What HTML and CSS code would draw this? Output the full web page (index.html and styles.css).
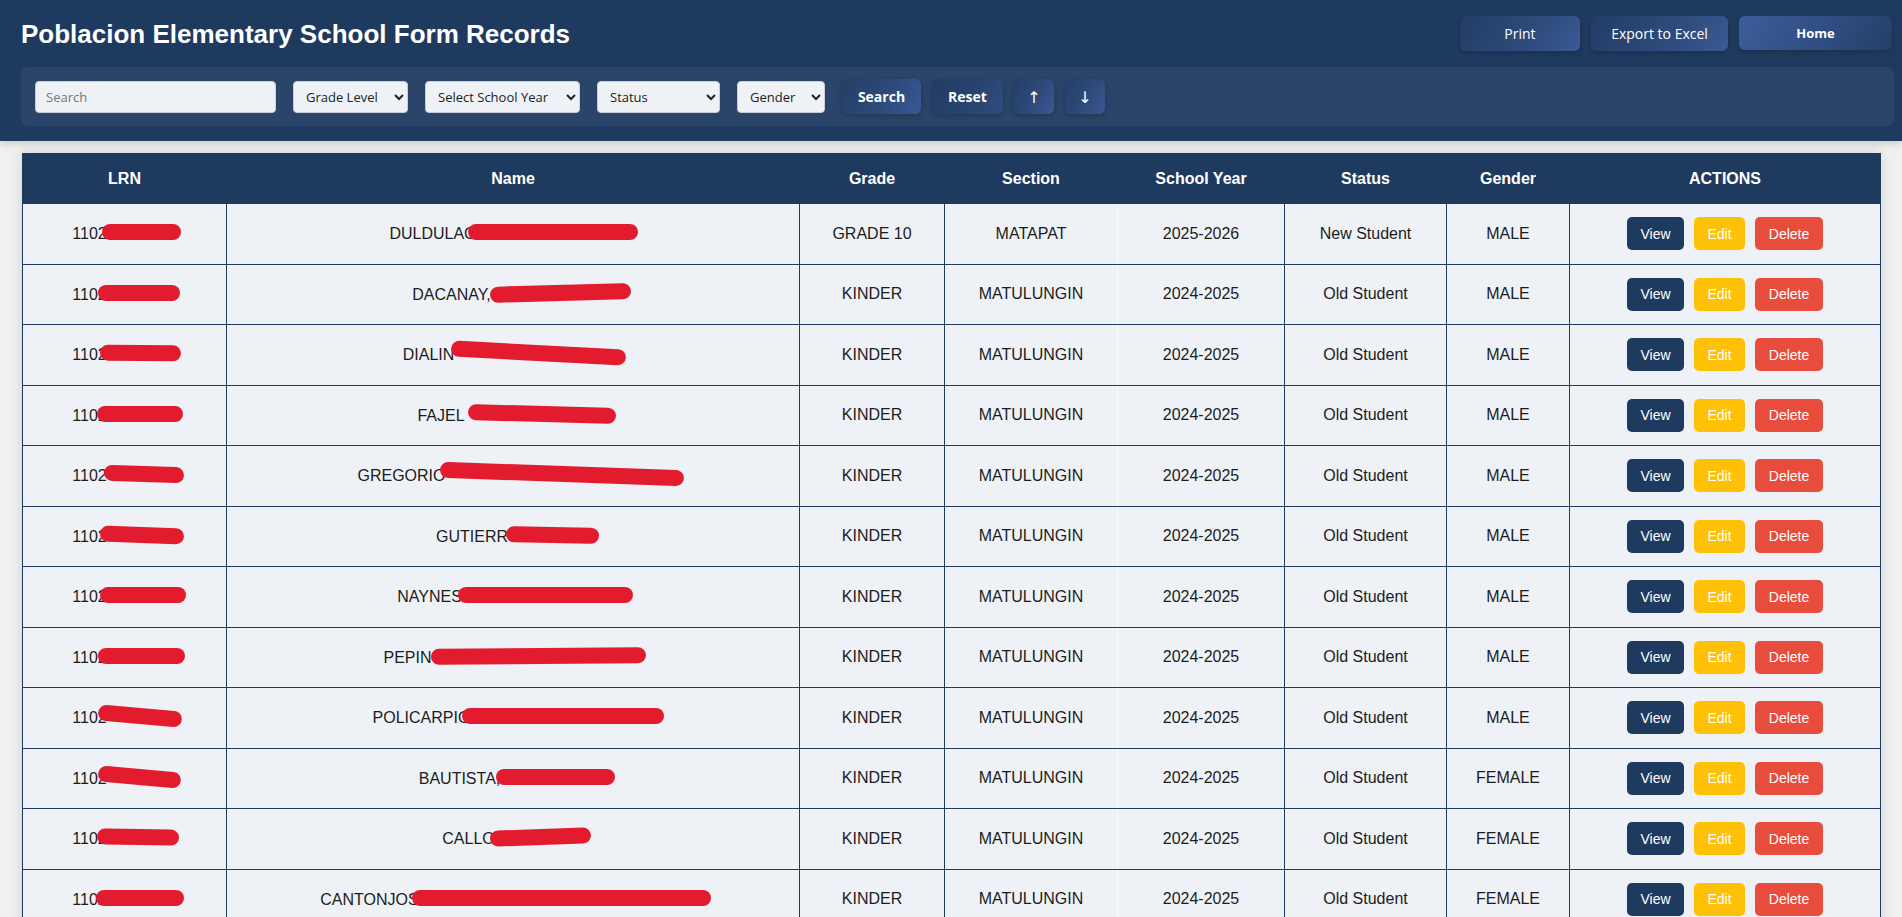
FILE: index.html
```html
<!DOCTYPE html>
<html lang="en">
<head>
<meta charset="utf-8">
<title>Poblacion Elementary School Form Records</title>
<link rel="stylesheet" href="styles.css">
</head>
<body>
<header class="topbar">
  <div class="title-row">
    <h1 class="page-title">Poblacion Elementary School Form Records</h1>
    <div class="top-actions">
      <button class="btn-top btn-print">Print</button>
      <button class="btn-top btn-export">Export to Excel</button>
      <button class="btn-top btn-home">Home</button>
    </div>
  </div>
  <div class="filters">
    <div class="controls">
      <input class="field field-search" type="text" placeholder="Search">
      <select class="field sel-grade"><option>Grade Level</option></select>
      <select class="field sel-year"><option>Select School Year</option></select>
      <select class="field sel-status"><option>Status</option></select>
      <select class="field sel-gender"><option>Gender</option></select>
    </div>
    <div class="btn-group">
      <button class="btn-f btn-search">Search</button>
      <button class="btn-f btn-reset">Reset</button>
      <button class="btn-f btn-arrow">&#8593;</button>
      <button class="btn-f btn-arrow">&#8595;</button>
    </div>
  </div>
</header>

<main class="content">
  <table class="records">
    <colgroup>
      <col class="c-lrn"><col class="c-name"><col class="c-grade"><col class="c-section"><col class="c-year"><col class="c-status"><col class="c-gender"><col class="c-actions">
    </colgroup>
    <thead>
      <tr><th>LRN</th><th>Name</th><th>Grade</th><th>Section</th><th>School Year</th><th>Status</th><th>Gender</th><th>ACTIONS</th></tr>
    </thead>
    <tbody>
      <tr>
        <td>1102<span class="mark" style="--ml:-5px;--w:79px;--mr:-4px;--r:0deg"></span></td>
        <td>DULDULAC<span class="mark" style="--ml:-8px;--w:170px;--mr:-1px;--r:0deg"></span></td>
        <td>GRADE 10</td><td class="sec">MATAPAT</td><td>2025-2026</td><td>New Student</td><td>MALE</td>
        <td><div class="acts"><button class="act view">View</button><button class="act edit">Edit</button><button class="act del">Delete</button></div></td>
      </tr>
      <tr>
        <td>1102<span class="mark" style="--ml:-9px;--w:82px;--mr:-3px;--r:0deg"></span></td>
        <td>DACANAY,<span class="mark" style="--ml:-1px;--w:141px;--mr:-17px;--r:-1.5deg"></span></td>
        <td>KINDER</td><td class="sec">MATULUNGIN</td><td>2024-2025</td><td>Old Student</td><td>MALE</td>
        <td><div class="acts"><button class="act view">View</button><button class="act edit">Edit</button><button class="act del">Delete</button></div></td>
      </tr>
      <tr>
        <td>1102<span class="mark" style="--ml:-7px;--w:81px;--mr:-4px;--r:0.5deg"></span></td>
        <td>DIALIN<span class="mark" style="--ml:-3px;--w:175px;--mr:-3px;--r:3deg"></span></td>
        <td>KINDER</td><td class="sec">MATULUNGIN</td><td>2024-2025</td><td>Old Student</td><td>MALE</td>
        <td><div class="acts"><button class="act view">View</button><button class="act edit">Edit</button><button class="act del">Delete</button></div></td>
      </tr>
      <tr>
        <td>1102<span class="mark" style="--ml:-10px;--w:86px;--mr:-6px;--r:0deg"></span></td>
        <td>FAJEL<span class="mark" style="--ml:3px;--w:148px;--mr:-7px;--r:1.5deg"></span></td>
        <td>KINDER</td><td class="sec">MATULUNGIN</td><td>2024-2025</td><td>Old Student</td><td>MALE</td>
        <td><div class="acts"><button class="act view">View</button><button class="act edit">Edit</button><button class="act del">Delete</button></div></td>
      </tr>
      <tr>
        <td>1102<span class="mark" style="--ml:-3px;--w:80px;--mr:-7px;--r:2deg"></span></td>
        <td>GREGORIO<span class="mark" style="--ml:-6px;--w:244px;--mr:-15px;--r:2deg"></span></td>
        <td>KINDER</td><td class="sec">MATULUNGIN</td><td>2024-2025</td><td>Old Student</td><td>MALE</td>
        <td><div class="acts"><button class="act view">View</button><button class="act edit">Edit</button><button class="act del">Delete</button></div></td>
      </tr>
      <tr>
        <td>1102<span class="mark" style="--ml:-7px;--w:84px;--mr:-7px;--r:2deg"></span></td>
        <td>GUTIERR<span class="mark" style="--ml:-2px;--w:93px;--mr:-9px;--r:1deg"></span></td>
        <td>KINDER</td><td class="sec">MATULUNGIN</td><td>2024-2025</td><td>Old Student</td><td>MALE</td>
        <td><div class="acts"><button class="act view">View</button><button class="act edit">Edit</button><button class="act del">Delete</button></div></td>
      </tr>
      <tr>
        <td>1102<span class="mark" style="--ml:-7px;--w:86px;--mr:-9px;--r:0deg"></span></td>
        <td>NAYNES<span class="mark" style="--ml:-4px;--w:175px;--mr:-4px;--r:0deg"></span></td>
        <td>KINDER</td><td class="sec">MATULUNGIN</td><td>2024-2025</td><td>Old Student</td><td>MALE</td>
        <td><div class="acts"><button class="act view">View</button><button class="act edit">Edit</button><button class="act del">Delete</button></div></td>
      </tr>
      <tr>
        <td>1102<span class="mark" style="--ml:-9px;--w:87px;--mr:-8px;--r:0deg"></span></td>
        <td>PEPIN<span class="mark" style="--ml:-1px;--w:215px;--mr:-3px;--r:-0.5deg"></span></td>
        <td>KINDER</td><td class="sec">MATULUNGIN</td><td>2024-2025</td><td>Old Student</td><td>MALE</td>
        <td><div class="acts"><button class="act view">View</button><button class="act edit">Edit</button><button class="act del">Delete</button></div></td>
      </tr>
      <tr>
        <td>1102<span class="mark" style="--ml:-9px;--w:84px;--mr:-5px;--r:5deg"></span></td>
        <td>POLICARPIO<span class="mark" style="--ml:-8px;--w:202px;--mr:-11px;--r:0deg"></span></td>
        <td>KINDER</td><td class="sec">MATULUNGIN</td><td>2024-2025</td><td>Old Student</td><td>MALE</td>
        <td><div class="acts"><button class="act view">View</button><button class="act edit">Edit</button><button class="act del">Delete</button></div></td>
      </tr>
      <tr>
        <td>1102<span class="mark" style="--ml:-9px;--w:83px;--mr:-4px;--r:5deg"></span></td>
        <td>BAUTISTA,<span class="mark" style="--ml:-4px;--w:119px;--mr:-8px;--r:0deg"></span></td>
        <td>KINDER</td><td class="sec">MATULUNGIN</td><td>2024-2025</td><td>Old Student</td><td>FEMALE</td>
        <td><div class="acts"><button class="act view">View</button><button class="act edit">Edit</button><button class="act del">Delete</button></div></td>
      </tr>
      <tr>
        <td>1102<span class="mark" style="--ml:-10px;--w:82px;--mr:-2px;--r:1deg"></span></td>
        <td>CALLO<span class="mark" style="--ml:-5px;--w:101px;--mr:-7px;--r:-2deg"></span></td>
        <td>KINDER</td><td class="sec">MATULUNGIN</td><td>2024-2025</td><td>Old Student</td><td>FEMALE</td>
        <td><div class="acts"><button class="act view">View</button><button class="act edit">Edit</button><button class="act del">Delete</button></div></td>
      </tr>
      <tr>
        <td>1102<span class="mark" style="--ml:-11px;--w:88px;--mr:-7px;--r:0deg"></span></td>
        <td>CANTONJOS<span class="mark" style="--ml:-7px;--w:299px;--mr:-5px;--r:0deg"></span></td>
        <td>KINDER</td><td class="sec">MATULUNGIN</td><td>2024-2025</td><td>Old Student</td><td>FEMALE</td>
        <td><div class="acts"><button class="act view">View</button><button class="act edit">Edit</button><button class="act del">Delete</button></div></td>
      </tr>
    </tbody>
  </table>
</main>
</body>
</html>
```

FILE: styles.css
```css
* { box-sizing: border-box; }

html, body {
  margin: 0;
  padding: 0;
}

body {
  background: #f0f0f0;
  font-family: "Liberation Sans", Arial, sans-serif;
  color: #222;
}

/* ---------- top bar ---------- */
.topbar {
  background: #1f3a5f;
  padding: 16px 8px 15px 21px;
  box-shadow: 0 2px 8px rgba(0, 0, 0, 0.18);
  position: relative;
  z-index: 1;
}

.title-row {
  display: flex;
  align-items: center;
  justify-content: space-between;
  height: 35px;
  margin-right: 2px;
  margin-bottom: 16px;
}

.page-title {
  margin: 0;
  color: #fff;
  font-family: "Liberation Sans", Arial, sans-serif;
  font-weight: bold;
  font-size: 26px;
  line-height: 30px;
}

.top-actions {
  display: flex;
  gap: 11px;
}

.btn-top {
  height: 35px;
  border: none;
  border-radius: 6px;
  color: #fff;
  font-family: "Open Sans", "DejaVu Sans", sans-serif;
  font-size: 14px;
  padding: 0;
  background: linear-gradient(120deg, #223d65 0%, #2e4b7c 60%, #3a5a95 100%);
  box-shadow: 0 2px 5px rgba(0, 0, 0, 0.2);
}

.btn-print { width: 120px; }
.btn-export { width: 137px; }
.btn-home {
  width: 153px;
  height: 34px;
  font-weight: bold;
  font-size: 13px;
  background: linear-gradient(120deg, #3d5d9a 0%, #314f84 50%, #253f69 100%);
}

/* ---------- filter panel ---------- */
.filters {
  display: flex;
  align-items: center;
  height: 59px;
  padding: 0 14px;
  background: #2a4569;
  border-radius: 8px;
}

.controls {
  display: flex;
  align-items: center;
  gap: 17px;
}

.field {
  height: 32px;
  border: 1px solid #c9ced6;
  border-radius: 4px;
  background-color: #eef1f6;
  font-family: "Open Sans", "DejaVu Sans", sans-serif;
  font-size: 13px;
  color: #222;
  padding: 0 8px;
}

.field-search { width: 241px; padding-left: 10px; }
.field-search::placeholder { color: #777; }
.sel-grade { width: 115px; }
.sel-year { width: 155px; }
.sel-status { width: 123px; }
.sel-gender { width: 88px; }

.btn-group {
  display: flex;
  align-items: center;
  gap: 11px;
  margin-left: 17px;
}

.btn-f {
  height: 35px;
  border: none;
  border-radius: 6px;
  color: #fff;
  font-family: "Open Sans", "DejaVu Sans", sans-serif;
  font-weight: bold;
  font-size: 14px;
  padding: 0;
  background: linear-gradient(120deg, #233e66 0%, #2d4a7a 55%, #3a5994 100%);
  box-shadow: 0 2px 5px rgba(0, 0, 0, 0.2);
}

.btn-search { width: 79px; }
.btn-reset {
  width: 71px;
  background: linear-gradient(120deg, #223c63 0%, #28446f 60%, #2f4d80 100%);
}
.btn-arrow {
  width: 40px;
  font-weight: normal;
  font-size: 16px;
}

/* ---------- table ---------- */
.content {
  padding: 12px 22px 20px 22px;
}

.records {
  width: 1858px;
  table-layout: fixed;
  border-collapse: collapse;
  box-shadow: 0 0 12px rgba(0, 0, 0, 0.12);
}

.c-lrn { width: 204px; }
.c-name { width: 573px; }
.c-grade { width: 145px; }
.c-section { width: 173px; }
.c-year { width: 167px; }
.c-status { width: 162px; }
.c-gender { width: 123px; }
.c-actions { width: 311px; }

.records th {
  height: 50px;
  padding: 0;
  background: #1f3a5f;
  color: #fff;
  font-weight: bold;
  font-size: 16px;
  border: 1px solid #1f3a5f;
  text-align: center;
}

.records td {
  height: 60.5px;
  padding: 0;
  background: #eef2f7;
  border: 1px solid #1f3a5f;
  text-align: center;
  font-size: 16px;
  color: #1c1c1c;
  white-space: nowrap;
}

.records td.sec {
  border-right-color: #f7f9fc;
}

.mark {
  display: inline-block;
  height: 16px;
  vertical-align: -1px;
  width: var(--w);
  margin-left: var(--ml);
  margin-right: var(--mr);
  transform: rotate(var(--r));
  background: #e31b2e;
  border-radius: 8px;
}

.acts {
  display: flex;
  justify-content: center;
  gap: 10px;
}

.act {
  height: 33px;
  padding: 0 13px;
  border: none;
  border-radius: 5px;
  color: #fff;
  font-family: "Liberation Sans", Arial, sans-serif;
  font-size: 14px;
}

.act.view { background: #1f3a5f; min-width: 57px; }
.act.edit { background: #ffc107; min-width: 51px; }
.act.del { background: #e74c3c; min-width: 68px; }
```
